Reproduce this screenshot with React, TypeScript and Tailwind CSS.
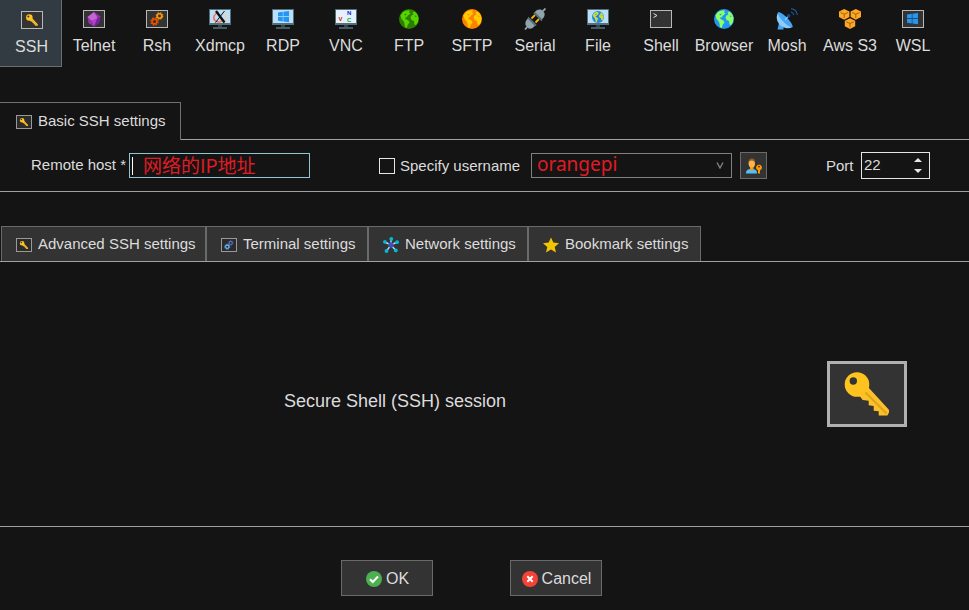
import { useState, type ReactNode } from "react";

type Session = {
  name: string;
  icon: ReactNode;
};

const SESSIONS: Session[] = [
  { name: "SSH", icon: <Framed><KeyArt /></Framed> },
  { name: "Telnet", icon: <Framed><GemArt /></Framed> },
  { name: "Rsh", icon: <Framed><GearsArt back="#ff9800" front="#e65100" /></Framed> },
  { name: "Xdmcp", icon: <Monitor><XArt /></Monitor> },
  { name: "RDP", icon: <Monitor><WindowsArt x={6} y={2} /></Monitor> },
  { name: "VNC", icon: <Monitor><VncArt /></Monitor> },
  { name: "FTP", icon: <Globe land="#55d400" sea="#2d7d00" /> },
  { name: "SFTP", icon: <Globe land="#ffcc00" sea="#ff8000" /> },
  { name: "Serial", icon: <SerialIcon /> },
  { name: "File", icon: <Monitor><Globe land="#cddc39" sea="#1e88e5" x={5} y={2} size={12} /></Monitor> },
  { name: "Shell", icon: <Framed><PromptArt /></Framed> },
  { name: "Browser", icon: <Globe land="#8cff66" sea="#2196f3" /> },
  { name: "Mosh", icon: <DishIcon /> },
  { name: "Aws S3", icon: <CubesIcon /> },
  { name: "WSL", icon: <Framed><svg viewBox="1 1 20 16" className="size-full" aria-hidden><WindowsArt x={5} y={3} /></svg></Framed> },
];

export default function App() {
  const [session, setSession] = useState("SSH");

  return (
    <main className="flex min-h-screen flex-col bg-[#141414] font-['Liberation_Sans',Arial,sans-serif] text-[15px] text-[#dcdcdc]">
      <nav className="flex" aria-label="Session type">
        {SESSIONS.map(({ name, icon }) => (
          <button
            key={name}
            type="button"
            aria-pressed={session === name}
            onClick={() => setSession(name)}
            className={`flex h-[67px] shrink-0 flex-col items-center gap-1 text-base leading-6 whitespace-nowrap ${
              session === name
                ? "w-[62px] border-r border-b border-[#6a6e72] bg-[#333b42] pt-[9px] pl-[2px]"
                : "w-[63px] pt-2 pl-px"
            }`}
          >
            <span className="flex h-[22px] items-center justify-center">{icon}</span>
            {name}
          </button>
        ))}
      </nav>

      <div className="mt-[35px] flex" role="tablist">
        <button
          type="button"
          role="tab"
          aria-selected="true"
          className="flex h-[38px] w-[181px] items-center gap-[6px] border-t border-r border-[#707070] pl-4 whitespace-nowrap"
        >
          <SmallFrame><KeyArt /></SmallFrame>
          Basic SSH settings
        </button>
        <div className="flex-1 border-b border-[#a0a0a0]" />
      </div>

      <BasicSettings />

      <div className="mt-[34px] flex border-b border-[#a0a0a0] pl-px" role="tablist">
        <SettingsTab className="w-[205px]" label="Advanced SSH settings" icon={<SmallFrame><KeyArt /></SmallFrame>} />
        <SettingsTab
          className="w-[162px]"
          label="Terminal settings"
          icon={<SmallFrame><GearsArt back="#5c6bc0" front="#64b5f6" /></SmallFrame>}
        />
        <SettingsTab className="w-[160px]" label="Network settings" icon={<HubIcon />} />
        <SettingsTab className="w-[173px]" label="Bookmark settings" icon={<StarIcon />} />
      </div>

      <section className="flex flex-1 items-center pr-[62px]">
        <p className="flex-1 pt-[14px] pr-[37px] text-center text-lg">Secure Shell (SSH) session</p>
        <div className="h-[66px] w-20 border-[3px] border-[#b0b0b0] bg-[#333]">
          <KeyArt />
        </div>
      </section>

      <footer className="flex justify-center gap-[77px] border-t border-[#a0a0a0] pt-[33px] pr-[26px] pb-[14px]">
        <DialogButton label="OK" icon={<OkIcon />} />
        <DialogButton label="Cancel" icon={<CancelIcon />} />
      </footer>
    </main>
  );
}

function BasicSettings() {
  const [host, setHost] = useState("网络的IP地址");
  const [port, setPort] = useState(22);

  return (
    <form className="flex items-center border-b border-[#a0a0a0] py-3 pl-[31px] whitespace-nowrap">
      <label htmlFor="host" className="w-[98px]">Remote host *</label>
      <div className="flex h-[25px] w-[181px] items-center border border-[#8fc6d2] pl-[2px]">
        <span className="h-[18px] w-px bg-white" />
        <input
          id="host"
          value={host}
          onChange={(e) => setHost(e.target.value)}
          className="h-full min-w-0 flex-1 bg-transparent pb-[2px] pl-[10px] font-['Noto_Sans_CJK_SC',sans-serif] text-[19px] text-[#e01b24] outline-none"
        />
      </div>

      <input id="specify" type="checkbox" className="ml-[69px] size-4 appearance-none border border-[#e6e6e6] checked:bg-[#8fc6d2]" />
      <label htmlFor="specify" className="w-[136px] pt-px pl-[5px]">Specify username</label>
      <div className="grid h-[25px] w-[201px] items-center border border-[#808080]">
        <select
          aria-label="Username"
          className="col-start-1 row-start-1 -mt-[3px] h-[26px] w-full appearance-none self-start bg-transparent pl-[5px] font-['Noto_Sans',sans-serif] text-[19px] leading-[26px] text-[#e01b24] outline-none"
        >
          <option>orangepi</option>
        </select>
        <svg className="pointer-events-none col-start-1 row-start-1 mr-[7px] h-[7px] w-2 justify-self-end" viewBox="0 0 8 7" fill="none" stroke="#808080" strokeWidth="1.4" aria-hidden>
          <path d="M1 .5 4 6 7 .5" />
        </svg>
      </div>
      <button type="button" aria-label="Manage users" className="ml-2 flex size-[27px] items-center justify-center border border-[#6a6a6a] bg-[#333]">
        <UserKeyIcon />
      </button>

      <label htmlFor="port" className="ml-[59px] w-[35px] pt-px">Port</label>
      <div className="flex h-[27px] w-[69px] border border-[#e6e6e6]">
        <input
          id="port"
          inputMode="numeric"
          value={port}
          onChange={(e) => setPort(Number(e.target.value) || 0)}
          className="min-w-0 flex-1 bg-transparent pl-[2px] outline-none"
        />
        <div className="flex w-[22px] flex-col items-center justify-center gap-[7px]">
          <button type="button" aria-label="Increase port" onClick={() => setPort(port + 1)}>
            <svg className="h-1 w-2" viewBox="0 0 8 4" aria-hidden><path d="M0 4 4 0l4 4z" fill="#e6e6e6" /></svg>
          </button>
          <button type="button" aria-label="Decrease port" onClick={() => setPort(port - 1)}>
            <svg className="h-1 w-2" viewBox="0 0 8 4" aria-hidden><path d="M0 0h8L4 4z" fill="#e6e6e6" /></svg>
          </button>
        </div>
      </div>
    </form>
  );
}

function SettingsTab({ label, icon, className }: { label: string; icon: ReactNode; className: string }) {
  return (
    <button
      type="button"
      role="tab"
      aria-selected="false"
      className={`flex h-[35px] items-center gap-[6px] border-x border-t border-[#6a6a6a] bg-[#333] pt-px pl-[14px] whitespace-nowrap ${className}`}
    >
      {icon}
      {label}
    </button>
  );
}

function DialogButton({ label, icon }: { label: string; icon: ReactNode }) {
  return (
    <button type="button" className="flex h-9 w-[92px] items-center justify-center gap-1 border border-[#6a6a6a] bg-[#333] pt-px pl-px text-base">
      {icon}
      {label}
    </button>
  );
}

/* Frames */

function Framed({ children }: { children: ReactNode }) {
  return <span className="block h-[18px] w-[22px] border border-[#b8b8b8] bg-[#333]">{children}</span>;
}

function SmallFrame({ children }: { children: ReactNode }) {
  return <span className="block h-[14px] w-4 shrink-0 border border-[#999] bg-[#2b2b2b]">{children}</span>;
}

function Monitor({ children }: { children: ReactNode }) {
  return (
    <svg className="h-5 w-[22px]" viewBox="0 0 22 20" aria-hidden>
      <path d="M9 15h4v4H9z" fill="#37474f" />
      <path d="M4 18h14v2H4z" fill="#455a64" />
      <path d="M0 0h22v16H0z" fill="#546e7a" />
      <path d="M1 1h20v13H1z" fill="#bbdefb" />
      {children}
    </svg>
  );
}

/* Icon artwork */

function KeyArt() {
  return (
    <svg className="size-full" viewBox="3 3 74 60" aria-hidden>
      <path d="M41 26 61.700 48.500Q63 51 60.300 54.500H51.700V50.300L46.700 49.700V45L41.700 44.300V39.700L35.700 39 31 33z" fill="#fbc02d" />
      <path
        d="M30 11.200a12.300 12.300 0 1 0 0 24.600 12.300 12.300 0 0 0 0-24.600zm-3.700 5.100a3.700 3.700 0 1 1 0 7.400 3.700 3.700 0 0 1 0-7.400z"
        fill="#ffc31f"
        fillRule="evenodd"
      />
      <path d="M38.500 31.500 59.500 52.500" stroke="#e0a412" strokeWidth="2" />
    </svg>
  );
}

function GemArt() {
  return (
    <svg className="size-full" viewBox="1 1 20 16" aria-hidden>
      <path d="M11 2 17.500 6.500 16 13l-5 3.500L5.500 13 4.500 7z" fill="#9c2fb5" />
      <path d="M11 2 4.500 7l4.500 4L14.500 8z" fill="#c264d4" />
      <path d="M9 11 14.500 8 11 16.500z" fill="#ab47bc" />
      <path d="M14.500 8l3-1.500L16 13l-5 3.500z" fill="#7b1fa2" />
    </svg>
  );
}

function GearsArt({ back, front }: { back: string; front: string }) {
  return (
    <svg className="size-full" viewBox="1 1 20 16" fill="none" aria-hidden>
      <circle cx="13.500" cy="6" r="2.200" stroke={back} strokeWidth="1.500" />
      <circle cx="13.500" cy="6" r="3.200" stroke={back} strokeWidth="1.200" strokeDasharray="1.500 1.013" />
      <circle cx="8.500" cy="11.500" r="2.400" stroke={front} strokeWidth="1.700" />
      <circle cx="8.500" cy="11.500" r="3.600" stroke={front} strokeWidth="1.300" strokeDasharray="1.700 1.127" />
    </svg>
  );
}

function WindowsArt({ x, y }: { x: number; y: number }) {
  return (
    <svg x={x} y={y} width="12" height="12" viewBox="0 0 12 12" fill="#2196f3" aria-hidden>
      <path d="M0 1.500 4.800.8v4.500H0zM5.400.7 11 0v5.300H5.400zM0 6h4.800v4.500L0 9.800zM5.400 6H11v5.300l-5.600-.7z" />
    </svg>
  );
}

function XArt() {
  return (
    <g fill="none">
      <path d="M9.500 3.500C5 4.500 3.500 9 6 11.500s6 1.800 8-.5" stroke="#ff7043" strokeWidth="1.500" />
      <path d="M14.500 4.500c3 1.500 3.500 5.500.5 7.500" stroke="#ffcc80" strokeWidth="1.300" />
      <path d="M7 2 15.500 13.500" stroke="#111" strokeWidth="2.400" />
      <path d="M15.500 2 6.500 13.500" stroke="#111" strokeWidth="1" />
    </g>
  );
}

function VncArt() {
  return (
    <g fontFamily="Liberation Sans" fontWeight="bold" fontSize="6">
      <path d="M1 1h20v13H1z" fill="#e3f2fd" />
      <text x="3.500" y="12" fill="#e01020">V</text>
      <text x="12" y="5.500" fill="#2020e0">N</text>
      <text x="12" y="13" fill="#10a010">C</text>
    </g>
  );
}

function Globe({ land, sea, x, y, size = 20 }: { land: string; sea: string; x?: number; y?: number; size?: number }) {
  return (
    <svg x={x} y={y} width={size} height={size} viewBox="0 0 20 20" aria-hidden>
      <circle cx="10" cy="10" r="10" fill={sea} />
      <path
        d="M1.500 6.500 4 3 7.500 1.500 11 1.500 10 3.500 11.500 4.500 9 6.500 7.500 8.500 6 8.500 6.500 10 9.500 11.500 10.500 13.500 8.500 16 8 19 6 18 5.500 14.500 4.500 12 2.500 10z"
        fill={land}
      />
      <path d="M12.500 6.500 14.500 5.500 13.500 3.500 15.500 2.500 18 5 19.500 8.500 19 13 17 16 15.500 15.500 15 12 12.500 11 11.500 8.500z" fill={land} />
      <path d="M5 5.500 7.500 4.500 7 6.500zM15.500 6.500l2.500.500-1.500 1z" fill={sea} />
    </svg>
  );
}

function PromptArt() {
  return (
    <svg className="size-full" viewBox="0 0 20 16" fill="none" stroke="#e0e0e0" aria-hidden>
      <path d="M2.500 2.500 6 4.500 2.500 6.500" />
    </svg>
  );
}

function SerialIcon() {
  return (
    <svg className="size-[22px]" viewBox="0 0 22 22" aria-hidden>
      <path d="M1 21.500 4 18M18 4l3.500-3.500" stroke="#90a4ae" strokeWidth="1.800" />
      <path d="M7.500 10.500 11 7M11.500 14.500 15 11" stroke="#ffb300" strokeWidth="1.800" />
      <path d="M10.500 4.500 17.500 11.500c2.500-1.500 3.500-3.500 3-6.500L17 1.500c-3-.5-5 .5-6.500 3z" fill="#90a4ae" />
      <path d="M4 10.500 11 17.500c-1.500 2.500-3.500 3.500-6.500 3L1.500 17c-.5-3 .5-5 2.500-6.500z" fill="#90a4ae" />
      <path d="M4 9.500 12 17.500M10 4.500 18 12.500" stroke="#546e7a" strokeWidth="1.800" />
    </svg>
  );
}

function DishIcon() {
  return (
    <svg className="size-[22px]" viewBox="0 0 22 22" fill="none" aria-hidden>
      <path d="M3 15 1.500 21.500h6L7.500 18z" fill="#42a5f5" />
      <path d="M2 4.500C-.5 9 1 14 4 17s8 4.500 12.500 2z" fill="#90caf9" />
      <path d="M2 4.500c1.500-1 6 2 9 5.200s6.500 7.800 5.500 9.300c-1.500 1-6-2-9-5.200S1 6 2 4.500z" fill="#42a5f5" />
      <path d="M9 12 12.500 8" stroke="#90caf9" strokeWidth="1.200" />
      <circle cx="12.700" cy="7.800" r="1.700" fill="#0d47a1" />
      <path d="M15 4c1.600.3 2.500 1.400 2.700 3M15 .7c3.600.3 6 2.700 6.300 6.300" stroke="#1565a8" strokeWidth="1.100" />
    </svg>
  );
}

function Cube({ x, y }: { x: number; y: number }) {
  return (
    <g transform={`translate(${x} ${y})`}>
      <path d="M5.200 0 10.400 2.500V8L5.200 10.800 0 8V2.500z" fill="#ffa726" />
      <path d="M1.500 3.500 5.200 5.200 9 3.500M5.200 5.200V9" fill="none" stroke="#7a4d00" strokeWidth=".7" />
    </g>
  );
}

function CubesIcon() {
  return (
    <svg className="size-[22px]" viewBox="0 0 22 22" aria-hidden>
      <Cube x={0} y={1} />
      <Cube x={11.6} y={1} />
      <Cube x={5.8} y={10.3} />
    </svg>
  );
}

function HubIcon() {
  return (
    <svg className="size-4 shrink-0" viewBox="0 0 16 16" aria-hidden>
      <path d="M8 8V1.800M8 8 1.800 5M8 8l6.200-3M8 8l-4.500 6M8 8l4.800 5.500" stroke="#b3dcf5" strokeWidth="1.400" />
      <circle cx="8" cy="8" r="2.700" fill="#3f51b5" />
      <g fill="#00bcd4">
        <circle cx="8.300" cy="1.900" r="1.900" />
        <circle cx="1.900" cy="4.800" r="1.900" />
        <circle cx="14.100" cy="5.200" r="1.900" />
        <circle cx="3.500" cy="14" r="1.900" />
        <circle cx="12.800" cy="13.400" r="1.900" />
      </g>
    </svg>
  );
}

function StarIcon() {
  return (
    <svg className="size-4 shrink-0" viewBox="0 0 16 16" aria-hidden>
      <path d="M8 .5 10.300 5.600 16 6.200 11.700 9.900 13 15.500 8 12.600 3 15.500 4.300 9.900 0 6.200 5.700 5.600z" fill="#f5c400" />
    </svg>
  );
}

function UserKeyIcon() {
  return (
    <svg className="size-4" viewBox="0 0 16 16" aria-hidden>
      <path d="M0 15.500c0-3.500 2-4.500 5.500-4.800 3.500.3 5.500 1.300 5.500 4.800z" fill="#4fc3f7" />
      <path d="M4 8.500h3.500v3L5.700 13 4 11.500z" fill="#ff9800" />
      <ellipse cx="5.800" cy="5.500" rx="3.200" ry="4" fill="#ffb74d" />
      <path d="M2.400 5C2 2 3.500.5 6 .5S9.500 2.500 9.200 5C8.500 3.300 7 2.500 5.500 2.500S3 3.500 2.400 5z" fill="#8d5a2b" />
      <path d="M13 6.500a3 3 0 0 0-1 5.800V15.500h2v-3.200a3 3 0 0 0-1-5.800zm0 1.200a.9.900 0 1 1 0 1.800.9.900 0 0 1 0-1.800z" fill="#ff9800" fillRule="evenodd" />
    </svg>
  );
}

function OkIcon() {
  return (
    <svg className="size-4" viewBox="0 0 16 16" aria-hidden>
      <circle cx="8" cy="8" r="8" fill="#4caf50" />
      <path d="M4 8.200 6.800 11 12 5.500" fill="none" stroke="#fff" strokeWidth="2" />
    </svg>
  );
}

function CancelIcon() {
  return (
    <svg className="size-4" viewBox="0 0 16 16" aria-hidden>
      <circle cx="8" cy="8" r="8" fill="#f44336" />
      <path d="m5.300 5.300 5.400 5.400M10.700 5.300l-5.400 5.400" stroke="#fff" strokeWidth="2" />
    </svg>
  );
}
